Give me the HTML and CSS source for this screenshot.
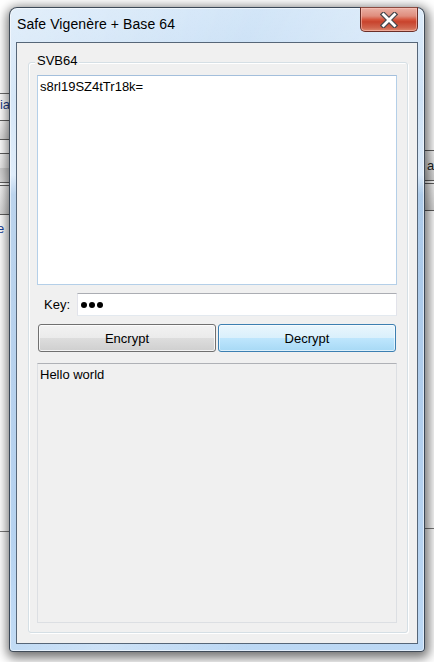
FILE: index.html
```html
<!DOCTYPE html>
<html lang="en">
<head>
<meta charset="utf-8">
<title>Safe Vigenère + Base 64</title>
<link rel="stylesheet" href="styles.css">
</head>
<body>
<div class="desk">
  <div class="behind behind-left">
    <div class="bl-text">lia</div>
    <div class="bl-bar bl-bar1"></div>
    <div class="bl-bar bl-bar2"></div>
    <div class="bl-bar bl-bar3"></div>
    <div class="bl-e">e</div>
  </div>
  <div class="behind behind-right">
    <div class="br-bar br-bar1"><span class="br-a">a</span></div>
    <div class="br-bar br-bar2"></div>
  </div>
  <div class="line-left"></div>
  <div class="line-right"></div>

  <div class="window">
    <div class="titlebar">
      <div class="title">Safe Vigenère + Base 64</div>
      <div class="close">
        <svg width="18" height="16" viewBox="0 0 18 16" aria-hidden="true">
          <path d="M3.5 2.5 L14.5 13.5 M14.5 2.5 L3.5 13.5" stroke="#47474b" stroke-width="5.2" stroke-linecap="square" fill="none"/>
          <path d="M3.5 2.5 L14.5 13.5 M14.5 2.5 L3.5 13.5" stroke="#ffffff" stroke-width="2.8" stroke-linecap="square" fill="none"/>
        </svg>
      </div>
    </div>
    <div class="client">
      <div class="group">
        <div class="legend">SVB64</div>
        <div class="textbox input-box">s8rl19SZ4tTr18k=</div>
        <div class="key-row">
          <span class="key-label">Key:</span>
          <div class="key-input">
            <span class="dot"></span><span class="dot"></span><span class="dot"></span>
          </div>
        </div>
        <div class="buttons">
          <div class="btn">Encrypt</div>
          <div class="btn btn-focus">Decrypt</div>
        </div>
        <div class="textbox output-box">Hello world</div>
      </div>
    </div>
  </div>
</div>
</body>
</html>
```

FILE: styles.css
```css
html, body {
  margin: 0;
  padding: 0;
}
body {
  width: 434px;
  height: 662px;
  overflow: hidden;
  background: #ffffff;
  font-family: "Liberation Sans", Arial, sans-serif;
  font-size: 13px;
  color: #000;
}
.desk {
  position: relative;
  width: 434px;
  height: 662px;
  background: #ffffff;
}

/* content of windows behind */
.behind {
  position: absolute;
  width: 12px;
  overflow: hidden;
}
.behind-left {
  left: 0;
  top: 93px;
  height: 160px;
  border-top: 1px solid #6d6d6d;
}
.bl-text {
  position: absolute;
  left: -3px;
  top: 3px;
  font-size: 13px;
  color: #1d3f8a;
}
.bl-bar {
  position: absolute;
  left: 0;
  width: 12px;
  background: linear-gradient(#f4f4f4, #d8d8d8);
  border-top: 1px solid #5f5f5f;
  border-bottom: 1px solid #5f5f5f;
}
.bl-bar1 { top: 26px; height: 18px; }
.bl-bar2 { top: 59px; height: 28px; background: linear-gradient(#f4f4f4 0%, #e8e8e8 50%, #cfcfcf 51%, #dcdcdc 100%); }
.bl-bar3 { top: 91px; height: 28px; }
.bl-e {
  position: absolute;
  left: -3px;
  top: 127px;
  font-size: 13px;
  color: #1a3f9a;
}
.behind-right {
  left: 424px;
  top: 150px;
  height: 80px;
}
.br-bar {
  position: absolute;
  left: 0;
  width: 12px;
  background: linear-gradient(#f6f6f6, #d9d9d9);
  border-top: 1px solid #5f5f5f;
  border-bottom: 1px solid #5f5f5f;
}
.br-bar1 { top: 0; height: 29px; }
.br-bar2 { top: 33px; height: 26px; }
.br-a {
  position: absolute;
  left: 3px;
  top: 7px;
  font-size: 13px;
  color: #222;
}
.line-left {
  position: absolute;
  left: 0;
  top: 531px;
  width: 10px;
  height: 1px;
  background: #7a7a7a;
}
.line-right {
  position: absolute;
  left: 424px;
  top: 528px;
  width: 10px;
  height: 1px;
  background: #7a7a7a;
}

/* the window */
.window {
  position: absolute;
  left: 9px;
  top: 7px;
  width: 402px;
  height: 636px;
  border: 1px solid rgba(25, 35, 48, 0.8);
  border-radius: 8px 8px 4px 4px;
  padding: 0 6px 7px 6px;
  box-sizing: content-box;
  display: flex;
  flex-direction: column;
  background:
    linear-gradient(115deg, rgba(255,255,255,0.35) 0%, rgba(255,255,255,0) 35%, rgba(255,255,255,0.25) 55%, rgba(255,255,255,0) 75%),
    linear-gradient(to bottom, #d3e6f8 0%, #c6ddf4 14%, #d6e7f8 26%, #a9c8e8 29%, #b0cdec 60%, #bcd8f4 100%);
  box-shadow: 1px 3px 11px 3px rgba(0, 0, 0, 0.55), inset 0 0 0 1px rgba(255, 255, 255, 0.55);
}
.titlebar {
  height: 34px;
  display: flex;
  align-items: flex-start;
  flex: none;
}
.title {
  padding: 8px 0 0 1px;
  font-size: 14px;
  line-height: 16px;
  letter-spacing: 0.1px;
  color: #000;
  white-space: nowrap;
}
.close {
  margin-left: auto;
  margin-top: -1px;
  margin-right: 0;
  width: 56px;
  height: 23px;
  border: 1px solid #6b2f28;
  border-top-color: #8a4a40;
  border-radius: 0 0 5px 5px;
  background: linear-gradient(to bottom, #eab1a5 0%, #df8d7d 35%, #d6573f 50%, #c8432d 60%, #d0634c 85%, #dd8a70 100%);
  box-shadow: inset 0 0 0 1px rgba(255, 200, 190, 0.55);
  display: flex;
  align-items: center;
  justify-content: center;
}
.close svg { display: block; margin-top: 1px; }

.client {
  flex: 1;
  border: 1px solid #566678;
  background: #f0f0f0;
  padding: 19px 9px 10px 11px;
  display: flex;
  flex-direction: column;
}
.group {
  position: relative;
  flex: 1;
  border: 1px solid #d5dfe5;
  border-radius: 3px;
  box-shadow: inset 1px 1px 0 #ffffff, 1px 1px 0 #ffffff;
  padding: 12px 10px 9px 8px;
  display: flex;
  flex-direction: column;
}
.legend {
  position: absolute;
  left: 6px;
  top: -10px;
  padding: 0 2px;
  background: #f0f0f0;
  font-size: 13px;
  line-height: 15px;
}
.textbox {
  box-sizing: border-box;
  padding: 3px 2px;
  font-size: 13px;
  line-height: 15px;
}
.input-box {
  height: 210px;
  background: #ffffff;
  border: 1px solid #b4cfe8;
  border-top-color: #a3bfdc;
  flex: none;
}
.key-row {
  margin-top: 8px;
  height: 23px;
  display: flex;
  align-items: center;
  padding-left: 7px;
  flex: none;
}
.key-label {
  width: 33px;
  flex: none;
  line-height: 15px;
}
.key-input {
  flex: 1;
  height: 23px;
  box-sizing: border-box;
  background: #ffffff;
  border: 1px solid #e2e3ea;
  border-top-color: #abadb3;
  border-bottom-color: #e3e9ef;
  display: flex;
  align-items: center;
  padding-left: 3px;
  gap: 2px;
}
.dot {
  width: 6px;
  height: 6px;
  border-radius: 50%;
  background: #000;
}
.buttons {
  margin-top: 8px;
  display: grid;
  grid-template-columns: 178px 178px;
  gap: 2px;
  padding-left: 1px;
  flex: none;
}
.btn {
  height: 28px;
  box-sizing: border-box;
  border: 1px solid #707070;
  border-radius: 3px;
  background: linear-gradient(to bottom, #f2f2f2 0%, #ebebeb 50%, #dddddd 51%, #cfcfcf 100%);
  box-shadow: inset 0 0 0 1px rgba(255, 255, 255, 0.75);
  display: flex;
  align-items: center;
  justify-content: center;
  font-size: 13px;
  line-height: 15px;
  padding-top: 1px;
}
.btn-focus {
  border-color: #3c7fb1;
  background: linear-gradient(to bottom, #eaf6fd 0%, #d9f0fc 50%, #bee6fd 51%, #a7d9f5 100%);
  box-shadow: inset 0 0 0 1px rgba(255, 255, 255, 0.6);
}
.output-box {
  margin-top: 11px;
  flex: 1;
  background: #f0f0f0;
  border: 1px solid #dcdfe3;
  border-top-color: #afb1b6;
  padding-top: 3px;
}
```
